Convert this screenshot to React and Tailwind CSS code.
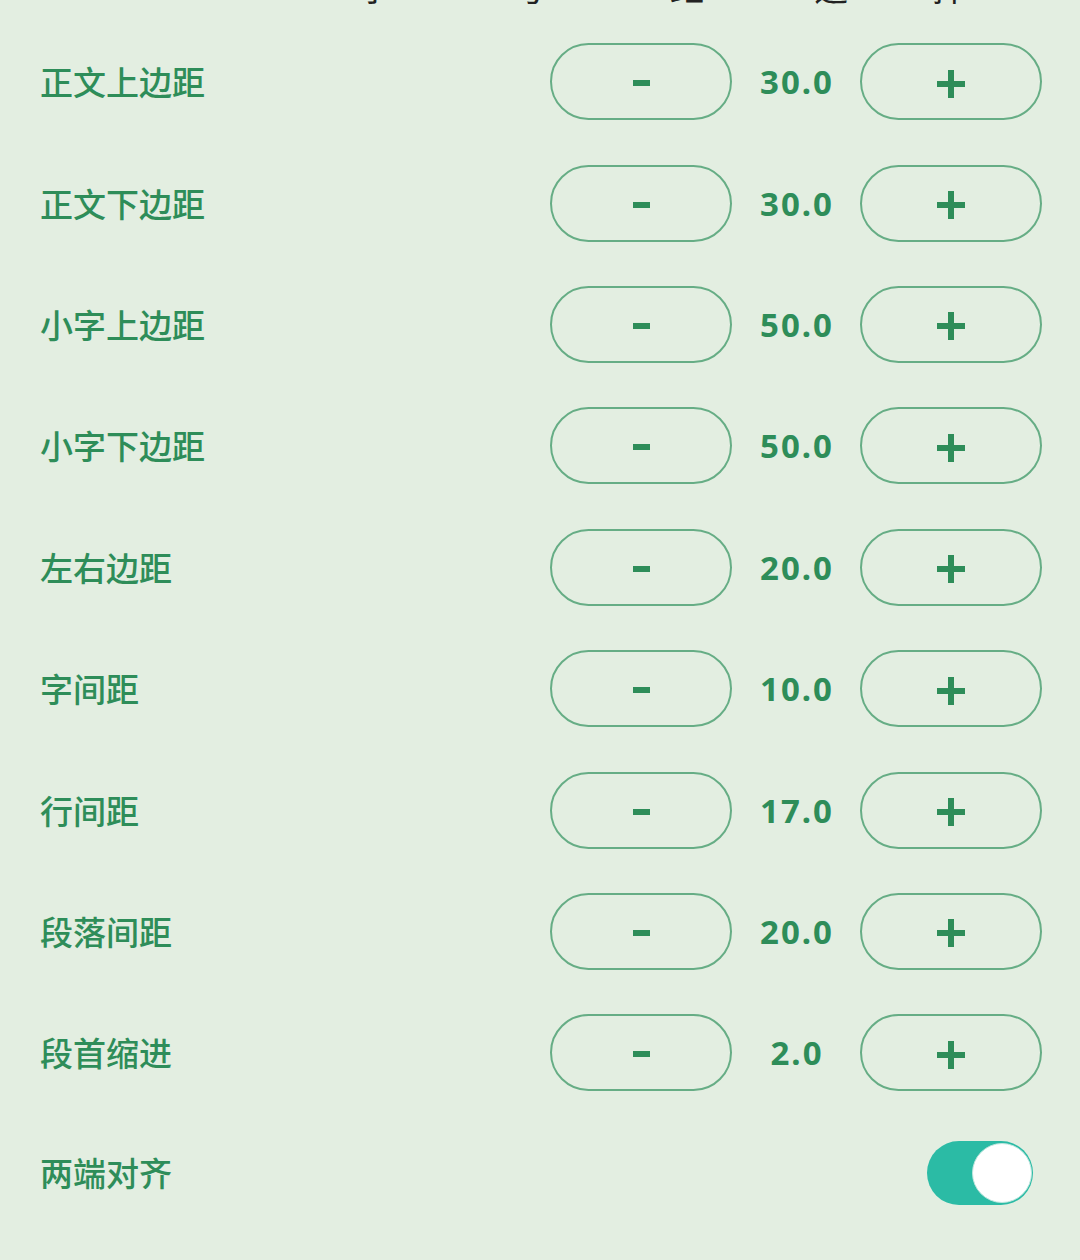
import React, { useState } from "react";

const rows = [
  ["正文上边距", "30.0"],
  ["正文下边距", "30.0"],
  ["小字上边距", "50.0"],
  ["小字下边距", "50.0"],
  ["左右边距", "20.0"],
  ["字间距", "10.0"],
  ["行间距", "17.0"],
  ["段落间距", "20.0"],
  ["段首缩进", "2.0"],
];

const cjk = { fontFamily: '"Noto Sans CJK SC", "Noto Sans", sans-serif' };
const num = { fontFamily: '"Noto Sans", "Noto Sans CJK SC", sans-serif' };

function Stepper({ value }) {
  return (
    <div className="flex items-center">
      <button className="w-[182px] h-[77px] rounded-full border-2 border-[#66ad85] flex items-center justify-center">
        <span className="sr-only">-</span>
        <span className="block w-[17px] h-[6px] bg-[#2e8d59] mt-[3px]" />
      </button>
      <div
        className="w-[128px] text-center text-[33px] font-bold tracking-[2px] text-[#2e8d59] leading-none pl-[2px]"
        style={num}
      >
        {value}
      </div>
      <button className="w-[182px] h-[77px] rounded-full border-2 border-[#66ad85] flex items-center justify-center">
        <span className="sr-only">+</span>
        <span className="relative block w-[28px] h-[28px] mt-[4px]">
          <span className="absolute left-0 top-[11px] w-[28px] h-[6px] bg-[#2e8d59]" />
          <span className="absolute top-0 left-[11px] w-[6px] h-[28px] bg-[#2e8d59]" />
        </span>
      </button>
    </div>
  );
}

export default function App() {
  const [on, setOn] = useState(true);
  return (
    <div className="w-[1080px] h-[1260px] bg-[#e3eee1] overflow-hidden" style={cjk}>
      <div className="h-[4px] overflow-hidden flex items-end text-[34px] leading-none text-[#222]">
        <span className="block ml-[358px]">字</span>
        <span className="block ml-[120px]">号</span>
        <span className="block ml-[124px]">距</span>
        <span className="block ml-[110px]">选</span>
        <span className="block ml-[84px]">择</span>
      </div>
      <div className="pt-[17px]">
        {rows.map(([label, value]) => (
          <div key={label} className="h-[121.4px] flex items-center justify-between pl-[40px] pr-[38px]">
            <span className="text-[33px] font-medium text-[#2e8d59] leading-none">{label}</span>
            <Stepper value={value} />
          </div>
        ))}
        <div className="h-[121.4px] flex items-center justify-between pl-[40px] pr-[47px]">
          <span className="text-[33px] font-medium text-[#2e8d59] leading-none -mt-[3px]">两端对齐</span>
          <button
            onClick={() => setOn(!on)}
            className="w-[106px] h-[64px] rounded-full bg-[#2bbba5] flex items-center justify-end pr-[1px] -mt-[3px]"
          >
            <span className="block w-[60px] h-[60px] rounded-full bg-white border border-[#bfe6de]" />
          </button>
        </div>
      </div>
    </div>
  );
}
